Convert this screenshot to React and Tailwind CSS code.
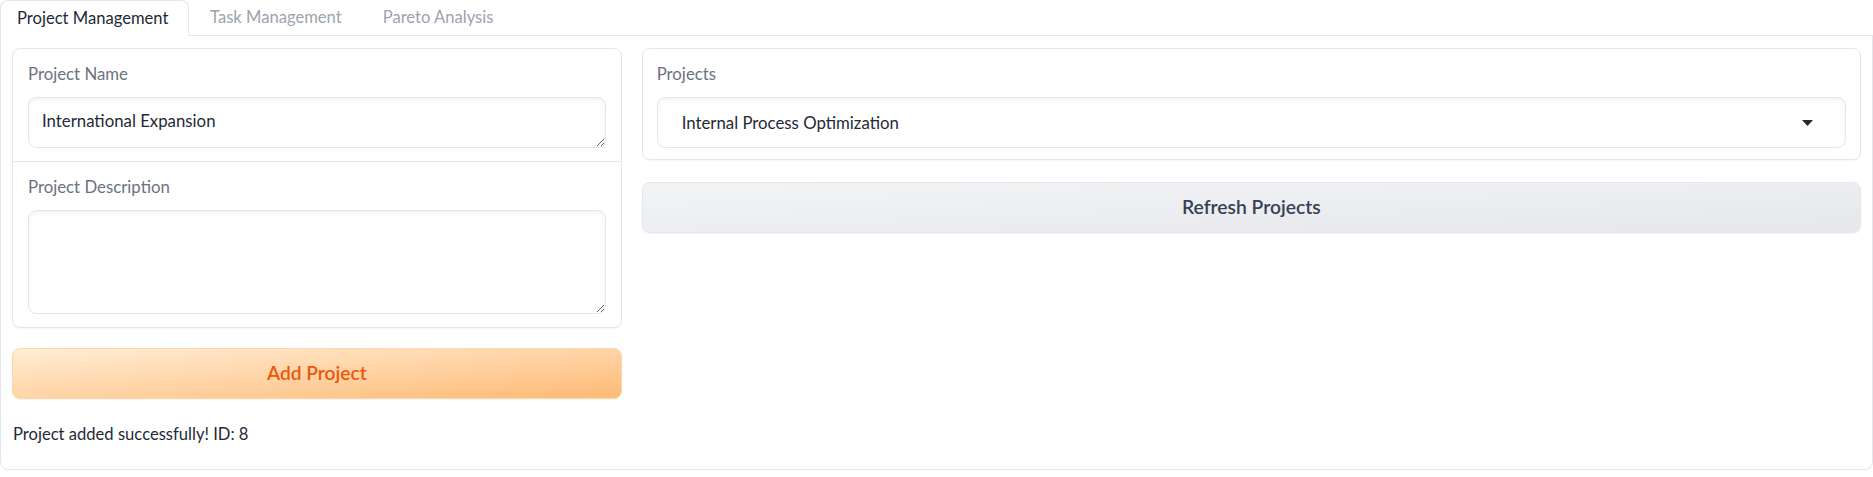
import React from "react";

function Label({ children }) {
  return (
    <div className="h-[20px] leading-[20px] text-[16.8px] text-[#6b7280] mb-[13px]">{children}</div>
  );
}

function Caret() {
  return (
    <svg width="11" height="6" viewBox="0 0 11 6" className="block">
      <path d="M0 0 L11 0 L5.5 6 Z" fill="#1f2937" />
    </svg>
  );
}

export default function App() {
  return (
    <div
      className="w-[1873px] h-[477px] bg-white text-[#1f2937] overflow-hidden"
      style={{ fontFamily: "Lato, 'Noto Sans', sans-serif" }}
    >
      {/* Tab bar */}
      <div className="flex h-[36px]">
        <div className="w-[189px] h-[36px] border-t border-l border-r border-[#e5e7eb] rounded-t-[8px] bg-white flex items-center pl-[16px] text-[16.6px] text-[#1f2937]">
          Project Management
        </div>
        <div className="flex-1 flex items-center border-b border-[#e5e7eb] text-[16.6px] text-[#9ca3af]">
          <div className="ml-[21px]">Task Management</div>
          <div className="ml-[41px]">Pareto Analysis</div>
        </div>
      </div>

      {/* Tab panel */}
      <div className="h-[434px] border-l border-r border-b border-[#e5e7eb] rounded-b-[8px] px-[11px] pt-[12px]">
        <div className="flex gap-[20px]">
          {/* Left column */}
          <div className="flex-1 flex flex-col">
            <div className="border border-[#e5e7eb] rounded-[8px] bg-[#e5e7eb] flex flex-col gap-px overflow-hidden shadow-[0_1px_2px_rgba(0,0,0,0.04)]">
              <div className="bg-white px-[15px] pt-[15px] pb-[13px]">
                <Label>Project Name</Label>
                <textarea
                  rows={1}
                  defaultValue="International Expansion"
                  className="block w-full h-[51px] border border-[#e5e7eb] rounded-[8px] px-[13px] pt-[11px] text-[16.8px] leading-[24px] text-[#1f2937] shadow-[inset_0_2px_4px_rgba(0,0,0,0.05)] outline-none bg-white"
                  style={{ fontFamily: "Lato, 'Noto Sans', sans-serif" }}
                />
              </div>
              <div className="bg-white px-[15px] pt-[15px] pb-[13px]">
                <Label>Project Description</Label>
                <textarea
                  rows={4}
                  defaultValue=""
                  className="block w-full h-[104px] border border-[#e5e7eb] rounded-[8px] px-[13px] pt-[11px] text-[16.8px] leading-[24px] text-[#1f2937] shadow-[inset_0_2px_4px_rgba(0,0,0,0.05)] outline-none bg-white"
                  style={{ fontFamily: "Lato, 'Noto Sans', sans-serif" }}
                />
              </div>
            </div>
            <button className="mt-[20px] h-[51px] w-full rounded-[8px] border border-[#fed7aa] bg-gradient-to-br from-[#ffedd5] to-[#fdba74] text-[#ea580c] text-[19.2px] font-semibold shadow-[0_1px_2px_rgba(0,0,0,0.05)]">
              Add Project
            </button>
            <div className="h-[37px] mt-[20px] leading-[30px] text-[16.6px] text-[#1f2937] pl-px">
              Project added successfully! ID: 8
            </div>
          </div>

          {/* Right column */}
          <div className="flex-[2] flex flex-col">
            <div className="border border-[#e5e7eb] rounded-[8px] bg-white px-[14px] pt-[15px] pb-[11px] shadow-[0_1px_2px_rgba(0,0,0,0.04)]">
              <Label>Projects</Label>
              <div className="h-[51px] border border-[#e5e7eb] rounded-[8px] shadow-[inset_0_2px_4px_rgba(0,0,0,0.05)] flex items-center pl-[24px] pr-[32px]">
                <div className="flex-1 text-[16.8px] text-[#1f2937]">Internal Process Optimization</div>
                <Caret />
              </div>
            </div>
            <button className="mt-[22px] h-[51px] w-full rounded-[8px] border border-[#e5e7eb] bg-gradient-to-br from-[#f3f4f6] to-[#e5e7eb] text-[#374151] text-[19.3px] font-semibold shadow-[0_1px_2px_rgba(0,0,0,0.05)]">
              Refresh Projects
            </button>
          </div>
        </div>
      </div>
    </div>
  );
}
